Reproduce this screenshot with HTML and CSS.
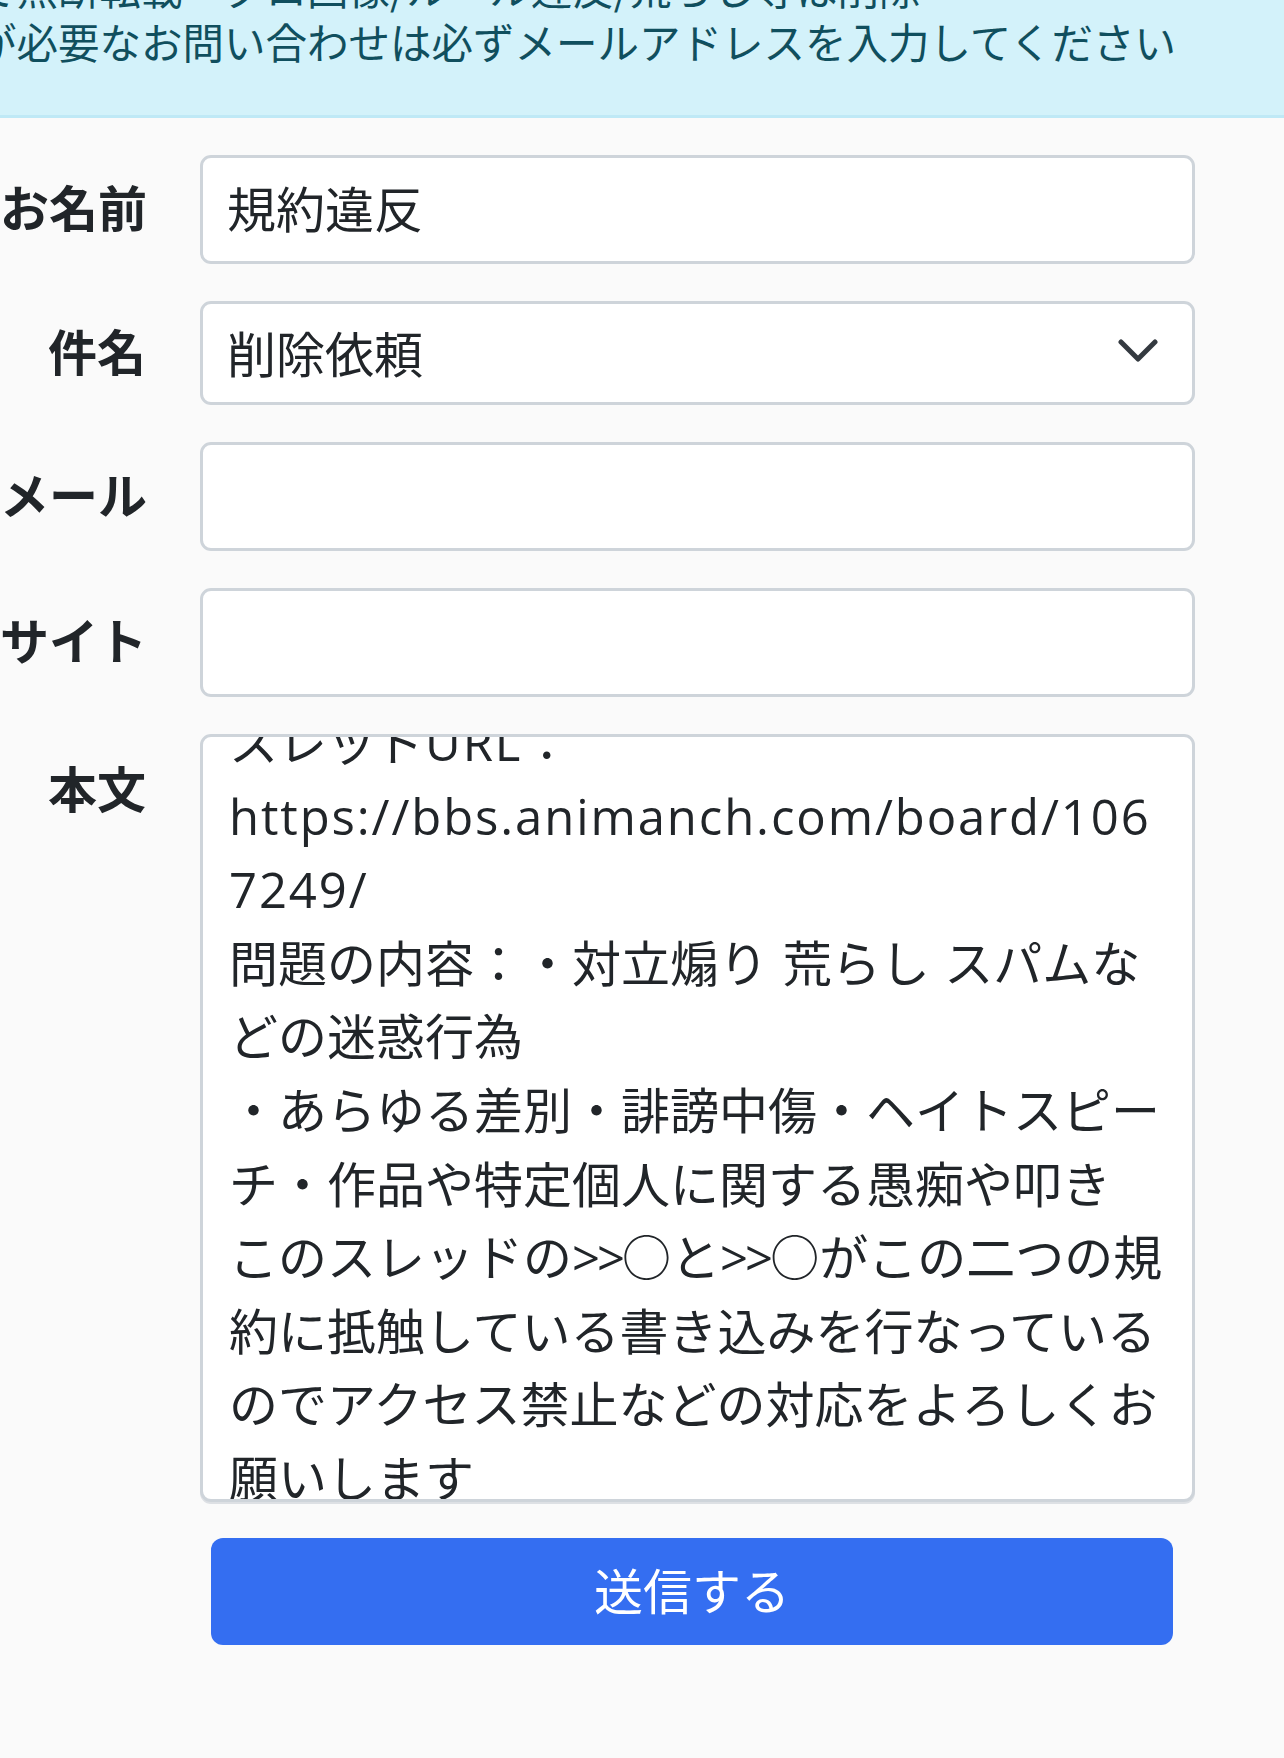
FILE: index.html
```html
<!DOCTYPE html>
<html lang="ja">
<head>
<meta charset="utf-8">
<title>お問い合わせ</title>
<link rel="stylesheet" href="styles.css">
</head>
<body>
  <div class="alert">
    <div class="alert-text">
      <p class="alert-line">規約で無断転載・グロ画像/ルール違反/荒らし等は削除</p>
      <p class="alert-line">返信が必要なお問い合わせは必ずメールアドレスを入力してください</p>
    </div>
  </div>

  <form class="contact">
    <div class="label">お名前</div>
    <div class="field">規約違反</div>

    <div class="label">件名</div>
    <div class="field field-select">
      <span class="select-value">削除依頼</span>
      <svg class="chevron" width="40" height="24" viewBox="0 0 40 24" aria-hidden="true">
        <path d="M3 3 L20 20 L37 3" fill="none" stroke="#343a40" stroke-width="5" stroke-linecap="round" stroke-linejoin="round"/>
      </svg>
    </div>

    <div class="label">メール</div>
    <div class="field"></div>

    <div class="label">サイト</div>
    <div class="field"></div>

    <div class="label label-top">本文</div>
    <div class="field field-area">
      <div class="area-content">
        <div class="area-line">スレッド<span class="latin">URL</span>：</div>
        <div class="area-line"><span class="latin">https://bbs.animanch.com/board/106</span></div>
        <div class="area-line"><span class="latin">7249/</span></div>
        <div class="area-line">問題の内容：・対立煽り<span class="latin"> </span>荒らし<span class="latin"> </span>スパムな</div>
        <div class="area-line">どの迷惑行為</div>
        <div class="area-line">・あらゆる差別・誹謗中傷・ヘイトスピー</div>
        <div class="area-line">チ・作品や特定個人に関する愚痴や叩き</div>
        <div class="area-line">このスレッドの<span class="latin tight">&gt;&gt;</span>○と<span class="latin tight">&gt;&gt;</span>○がこの二つの規</div>
        <div class="area-line">約に抵触している書き込みを行なっている</div>
        <div class="area-line">のでアクセス禁止などの対応をよろしくお</div>
        <div class="area-line">願いします</div>
      </div>
    </div>

    <div class="actions">
      <button type="button" class="submit">送信する</button>
    </div>
  </form>
</body>
</html>
```

FILE: styles.css
```css
html, body {
  margin: 0;
  padding: 0;
}

body {
  width: 1284px;
  min-height: 1758px;
  background: #fafafa;
  color: #212529;
  font-family: "Noto Sans CJK JP", "Noto Sans", sans-serif;
  overflow: hidden;
}

/* info banner (scrolled partly off the top/left) */
.alert {
  height: 115px;
  background: #d3f2fa;
  border-bottom: 3px solid #bfe9f6;
  color: #104f5e;
  display: flex;
  flex-direction: column;
  justify-content: flex-end;
  overflow: hidden;
}

.alert-text {
  margin-left: -108px;
  padding-bottom: 47px;
  font-size: 41.5px;
  line-height: 54px;
  white-space: nowrap;
}

.alert-line {
  margin: 0;
}

/* form grid */
.contact {
  display: grid;
  grid-template-columns: 146px 995px;
  column-gap: 54px;
  row-gap: 37px;
  padding-top: 37px;
}

.label {
  align-self: center;
  text-align: right;
  font-weight: 700;
  font-size: 49px;
  line-height: 73.6px;
  padding-bottom: 7px;
  white-space: nowrap;
}

.label-top {
  align-self: start;
  padding-top: 16px;
  padding-bottom: 0;
}

.field {
  box-sizing: border-box;
  height: 109px;
  background: #fff;
  border: 3px solid #ced4da;
  border-radius: 11px;
  padding: 0 24px 6px;
  display: flex;
  align-items: center;
  font-size: 49px;
  line-height: 73.6px;
  white-space: nowrap;
  overflow: hidden;
}

.field-select {
  height: 104px;
  padding-bottom: 3px;
  justify-content: space-between;
}

.chevron {
  flex: none;
  margin-right: 10px;
  margin-bottom: 2px;
}

.field-area {
  height: 768px;
  display: block;
  padding: 0 26px;
  box-shadow: 0 2px 0 #dde0e4;
}

.area-content {
  margin-top: -34px;
}

.area-line {
  height: 73.6px;
}

.latin {
  font-family: "Open Sans", "Noto Sans CJK JP", sans-serif;
  letter-spacing: 1.9px;
}

.latin.tight {
  letter-spacing: -3px;
}

.actions {
  grid-column: 2;
}

.submit {
  display: flex;
  align-items: center;
  justify-content: center;
  box-sizing: border-box;
  width: 962px;
  height: 107px;
  margin: -1px 0 0 11px;
  padding: 0 0 5px;
  background: #346ef1;
  border: none;
  border-radius: 12px;
  color: #fff;
  font-family: "Noto Sans CJK JP", sans-serif;
  font-size: 49px;
  line-height: 73.6px;
}
```
